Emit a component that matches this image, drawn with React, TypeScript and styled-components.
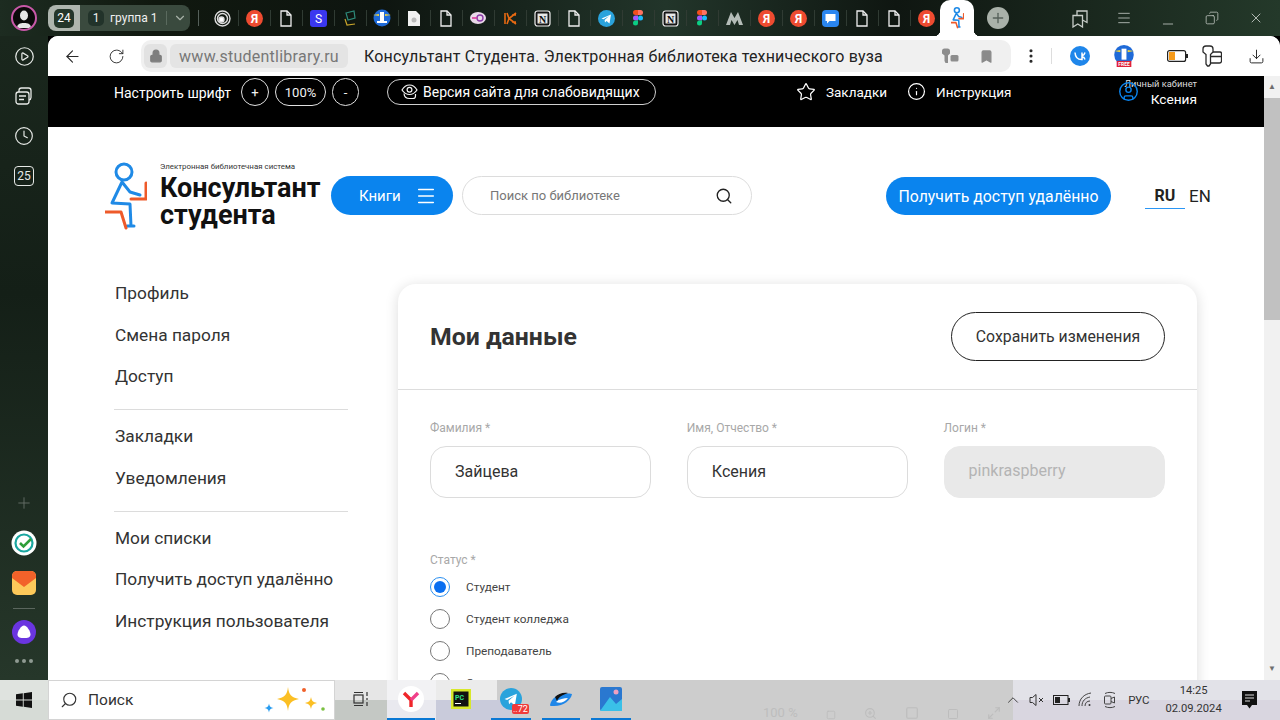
import React from "react";
import styled, { createGlobalStyle } from "styled-components";
import {
  ArrowLeft, RotateCw, Lock, Bookmark, MoreVertical, Download, Star, Info, CircleUser, Search,
  Menu, Plus, X, Minus, ChevronDown, CirclePlay, Clock, Copy, ChevronUp, Maximize2, ZoomIn, Square,
} from "lucide-react";

const Global = createGlobalStyle`
  html, body { margin: 0; padding: 0; width: 1280px; height: 720px; overflow: hidden; background: #000; }
  * { box-sizing: border-box; }
  body { font-family: Roboto, "Liberation Sans", sans-serif; }
`;

const Screen = styled.div`
  width: 1280px; height: 720px; display: flex; flex-direction: column; overflow: hidden;
`;
const Strip = styled.div`
  height: 36px; flex: none; display: flex; align-items: center;
  background: linear-gradient(90deg, #1d2c21 0%, #10180f 12%, #0e1510 30%, #22352a 52%, #0f1611 70%, #24392a 100%);
  color: #e8ebe8;
`;
const AvatarCell = styled.div`
  width: 48px; height: 36px; flex: none; display: flex; align-items: center; justify-content: center;
`;
const Avatar = styled.div`
  width: 26px; height: 26px; border-radius: 50%; border: 2px solid #c858a8; background: #0a0a0a;
  display: flex; align-items: center; justify-content: center; overflow: hidden;
`;
const Counter = styled.div`
  width: 32px; height: 26px; flex: none; border-radius: 8px 0 0 8px; background: #aeb5ae; display: flex; align-items: center; justify-content: center;
`;
const CounterInner = styled.span`
  width: 20px; height: 19px; border-radius: 5px; background: #24362a; color: #fff; font-size: 12px; display: flex; align-items: center; justify-content: center;
`;
const Group = styled.div`
  width: 110px; height: 26px; flex: none; background: #3a4a3e; border-radius: 0 8px 8px 0; display: flex; align-items: center; padding-left: 8px; font-size: 12px; color: #f0f0f0;
`;
const GroupNum = styled.span`
  width: 16px; height: 16px; border-radius: 5px; background: #22332a; display: flex; align-items: center; justify-content: center; margin-right: 6px;
`;
const GroupChevron = styled.span`
  margin-left: 8px; padding-left: 6px; border-left: 1px solid #5a6a5e; display: flex; color: #a8b2a8;
`;
const StripSep = styled.span`
  width: 1px; height: 16px; background: #55605a; flex: none; margin-left: 8px; margin-right: 7px;
`;
const TabSlot = styled.div<{ $sep?: boolean }>`
  width: 32px; height: 36px; flex: none; display: flex; align-items: center; justify-content: center; position: relative;
  &::before { content: ""; position: absolute; left: 0; top: 10px; height: 16px; width: 1px; background: ${(p) => (p.$sep ? "#303b33" : "transparent")}; }
`;
const ActiveTab = styled.div`
  width: 34px; height: 36px; flex: none; background: #fff; border-radius: 10px 10px 0 0; display: flex; align-items: center; justify-content: center; margin-left: -2px; position: relative;
  &::before, &::after { content: ""; position: absolute; bottom: 0; width: 6px; height: 6px; }
  &::before { left: -6px; background: radial-gradient(circle at 0 0, transparent 6px, #fff 6.5px); }
  &::after { right: -6px; background: radial-gradient(circle at 100% 0, transparent 6px, #fff 6.5px); }
`;
const NewTab = styled.div`
  width: 22px; height: 22px; border-radius: 50%; background: #a9b1a9; color: #556059; margin-left: 13px; flex: none; display: flex; align-items: center; justify-content: center;
`;
const WinControls = styled.div`
  margin-left: 49px; display: flex; color: #c7cdc8;
`;
const WinBtn = styled.div`
  width: 44px; height: 36px; display: flex; align-items: center; justify-content: center;
`;

const Middle = styled.div`
  flex: 1; min-height: 0; display: flex;
`;
const Rail = styled.div`
  width: 48px; flex: none; background: linear-gradient(180deg, #1a271d 0%, #141f17 40%, #26372a 100%);
  display: flex; flex-direction: column; align-items: center; color: #e6e9e6;
`;
const RailBtn = styled.div`
  width: 48px; height: 40px; flex: none; display: flex; align-items: center; justify-content: center;
`;
const RailDate = styled.div`
  width: 20px; height: 20px; border: 1.6px solid #e6e9e6; border-radius: 4px; font-size: 12px; display: flex; align-items: center; justify-content: center;
`;
const RailSpacer = styled.div`
  flex: 1;
`;
const RailLine = styled.div`
  width: 22px; height: 1px; background: #5b665e; margin: 5px 0;
`;
const RailSlot = styled.div<{ $h: number }>`
  width: 48px; height: ${(p) => p.$h}px; flex: none; display: flex; align-items: center; justify-content: center; color: #66716a;
`;
const Dots = styled.div`
  height: 22px; display: flex; align-items: center; gap: 3px; margin-bottom: 8px;
`;
const Dot = styled.span`
  width: 4px; height: 4px; border-radius: 50%; background: #8f9a92;
`;

const Browser = styled.div`
  flex: 1; min-width: 0; display: flex; flex-direction: column; background: #fff; border-radius: 10px 10px 0 0; overflow: hidden;
`;
const Toolbar = styled.div`
  height: 40px; flex: none; display: flex; align-items: center; background: #fff; color: #2a2a2a;
`;
const ToolBtn = styled.div<{ $w: number; $ml?: number }>`
  width: ${(p) => p.$w}px; height: 40px; flex: none; margin-left: ${(p) => p.$ml ?? 0}px; display: flex; align-items: center; justify-content: center;
`;
const Address = styled.div`
  width: 870px; height: 32px; flex: none; margin-left: 5px; border-radius: 10px; background: #f0f0f0; display: flex; align-items: center; padding-left: 3px;
`;
const LockChip = styled.div`
  width: 23px; height: 24px; border-radius: 6px; background: #e2e2e2; color: #7e7e7e; display: flex; align-items: center; justify-content: center; flex: none;
`;
const Domain = styled.div`
  width: 178px; height: 24px; margin-left: 3px; border-radius: 6px; background: #e4e4e4; color: #777; font-size: 16px; display: flex; align-items: center; justify-content: center; flex: none; white-space: nowrap; letter-spacing: .25px;
`;
const PageTitle = styled.div`
  margin-left: 16px; font-size: 16px; color: #222; white-space: nowrap; letter-spacing: .18px; width: 570px; flex: none;
`;
const AddrIcon = styled.div<{ $ml: number }>`
  margin-left: ${(p) => p.$ml}px; color: #8a8a8a; display: flex; flex: none;
`;
const ToolSep = styled.div`
  width: 1px; height: 16px; background: #ddd; flex: none;
`;

const Viewport = styled.div`
  flex: 1; min-height: 0; display: flex;
`;
const Page = styled.div`
  flex: 1; min-width: 0; overflow: hidden; background: #fff; display: flex; flex-direction: column;
`;
const Scrollbar = styled.div`
  width: 16px; flex: none; background: #f1f1f1; display: flex; flex-direction: column; align-items: center; color: #6e6e6e;
`;
const ScrollArrow = styled.div`
  height: 22px; flex: none; display: flex; align-items: center; justify-content: center;
  font-size: 8px; line-height: 1;
`;
const Thumb = styled.div`
  width: 16px; height: 222px; background: #c1c1c1; flex: none;
`;
const ScrollRest = styled.div`
  flex: 1;
`;

const TopBar = styled.div`
  height: 51px; flex: none; background: #000; color: #fff; display: flex; align-items: flex-start; padding: 2px 67px 0 66px;
`;
const FontLabel = styled.span`
  margin-top: 7px; white-space: nowrap; font-size: 14px; line-height: 17px; width: 117px; flex: none;
`;
const RoundBtn = styled.div<{ $w: number; $ml: number }>`
  width: ${(p) => p.$w}px; height: 28px; margin-left: ${(p) => p.$ml}px; border: 1px solid #e0e0e0; border-radius: 14px; flex: none;
  display: flex; align-items: center; justify-content: center; font-size: 13px; color: #f2f2f2;
`;
const VisionBtn = styled.div`
  width: 269px; height: 26px; margin: 1px 0 0 28px; border: 1px solid #cfcfcf; border-radius: 13px; flex: none;
  display: flex; align-items: center; gap: 5px; padding-left: 13px; font-size: 14px; white-space: nowrap;
`;
const TopLink = styled.div<{ $ml: number }>`
  margin: 4px 0 0 ${(p) => p.$ml}px; display: flex; align-items: center; gap: 10px; font-size: 13.5px; white-space: nowrap; flex: none;
`;
const Cabinet = styled.div`
  margin-left: 107px; display: flex; position: relative; flex: 1; justify-content: flex-end;
`;
const CabinetIcon = styled.div`
  position: absolute; left: 0; top: 3px; color: #0a84ee; display: flex;
`;
const CabinetText = styled.div`
  text-align: right; white-space: nowrap;
`;
const CabinetSmall = styled.div`
  font-size: 9.3px; line-height: 12px; color: #ddd;
`;
const CabinetName = styled.div`
  font-size: 13.7px; line-height: 17px; margin-top: 1px;
`;

const Header = styled.div`
  flex: none; height: 130px; display: flex; align-items: flex-start; padding: 35px 0 0 57px;
`;
const LogoMark = styled.svg`
  flex: none; display: block;
`;
const LogoText = styled.div`
  width: 171px; margin-left: 13px; flex: none; color: #111;
`;
const LogoSmall = styled.div`
  font-size: 7.9px; line-height: 10px; color: #333; white-space: nowrap; margin-bottom: 3px;
`;
const LogoBig = styled.div`
  font-size: 27px; line-height: 27px; font-weight: 700;
`;
const BooksBtn = styled.div`
  width: 122px; height: 39px; margin-top: 14px; border-radius: 20px; background: #0a84ee; color: #fff; flex: none;
  display: flex; align-items: center; padding-left: 28px; gap: 14px; font-size: 15px;
`;
const SearchBox = styled.div`
  width: 290px; height: 39px; margin: 14px 0 0 9px; border-radius: 20px; border: 1px solid #dcdcdc; flex: none;
  display: flex; align-items: center; justify-content: space-between; padding: 0 18px 0 27px; font-size: 13px; color: #777;
`;
const RemoteBtn = styled.div`
  width: 225px; height: 38px; margin: 15px 0 0 134px; border-radius: 19px; background: #0a84ee; color: #fff; flex: none;
  display: flex; align-items: center; justify-content: center; font-size: 15.85px; white-space: nowrap;
`;
const Lang = styled.div`
  margin: 24px 0 0 34px; display: flex; align-items: flex-start; color: #222;
`;
const LangItem = styled.div`
  width: 40px; height: 23px; text-align: center; line-height: 20px; font-size: 16px; font-weight: 700; border-bottom: 1px solid #2a96f5;
`;
const LangEn = styled.div`
  width: 30px; height: 23px; text-align: center; line-height: 20px; font-size: 17px;
`;

const Content = styled.div`
  flex: 1; min-height: 0; display: flex; padding: 27px 67px 0 66px; align-items: flex-start;
`;
const Side = styled.nav`
  width: 234px; flex: none; margin: -1px 50px 0 0; font-size: 17.3px; color: #333;
`;
const SideItem = styled.div`
  height: 41.5px; line-height: 20px; white-space: nowrap; padding-left: 1px;
`;
const SideSep = styled.div`
  height: 1px; background: #dcdcdc; margin: 1.5px 0 16px;
`;
const Card = styled.section`
  flex: 1; min-width: 0; border-radius: 18px; background: #fff; box-shadow: 0 2px 14px rgba(0, 0, 0, .14); height: 500px;
`;
const CardHead = styled.div`
  height: 106px; display: flex; align-items: center; justify-content: space-between; padding: 0 32px; border-bottom: 1px solid #ddd;
`;
const CardTitle = styled.h1`
  margin: 0; font-size: 24.8px; font-weight: 700; color: #333;
`;
const SaveBtn = styled.div`
  width: 214px; height: 49px; border: 1px solid #222; border-radius: 25px; display: flex; align-items: center; justify-content: center; font-size: 15.8px; color: #333; background: #fff;
`;
const CardBody = styled.div`
  padding: 31px 32px 0;
`;
const Fields = styled.div`
  display: grid; grid-template-columns: repeat(3, 221.3px); column-gap: 35.5px;
`;
const Label = styled.div`
  font-size: 12px; line-height: 14px; color: #a8a8a8; margin-bottom: 11px;
`;
const Input = styled.div<{ $disabled?: boolean }>`
  height: 52px; border-radius: 16px; border: 1px solid ${(p) => (p.$disabled ? "#e9e9e9" : "#dcdcdc")}; background: ${(p) => (p.$disabled ? "#e9e9e9" : "#fff")};
  color: ${(p) => (p.$disabled ? "#b4b4b4" : "#333")}; font-size: 16px; display: flex; align-items: center; padding: 0 0 ${(p) => (p.$disabled ? 3 : 1)}px 24px;
`;
const StatusLabel = styled(Label)`
  margin: 55px 0 4px;
`;
const RadioRow = styled.div`
  height: 32px; display: flex; align-items: center; gap: 16px; font-size: 11.8px; color: #444;
`;
const Radio = styled.span<{ $on?: boolean }>`
  width: 20px; height: 20px; border-radius: 50%; flex: none; background: #fff; border: ${(p) => (p.$on ? "1.5px solid #2a8ff0" : "1px solid #777")};
  display: flex; align-items: center; justify-content: center;
  &::after { content: ""; width: 12px; height: 12px; border-radius: 50%; background: ${(p) => (p.$on ? "#0a6ff0" : "transparent")}; }
`;

const Taskbar = styled.div`
  height: 40px; flex: none; display: flex; align-items: center; color: #222;
  background:
    linear-gradient(90deg, #dfe3df 0 48px, #fff 48px 335px, #e6e6e6 335px 387px, #f2f2f4 387px 436px, #ebebeb 436px 497px, #cdcdcd 497px 1013px, #e2e2e8 1013px 100%) top / 100% 50% no-repeat,
    linear-gradient(90deg, #d6dbd6 0 48px, #fff 48px 335px, #c4c8c4 335px 387px, #e9e9ef 387px 436px, #c9cbdb 436px 510px, #cdcdcd 510px 1013px, #d9d6e0 1013px 100%) bottom / 100% 50% no-repeat;
`;
const Start = styled.div`
  width: 48px; height: 40px; flex: none; display: flex; align-items: center; justify-content: center;
`;
const WinSearch = styled.div`
  width: 287px; height: 40px; flex: none; background: #fff; border: 1px solid #d4d4d4; display: flex; align-items: center; padding-left: 11px; gap: 10px; font-size: 15.5px; color: #333;
`;
const Sparkle = styled.svg`
  margin-left: auto; margin-right: 8px; flex: none;
`;
const TaskIcons = styled.div`
  display: flex; margin-left: 1px; flex: none;
`;
const TaskIcon = styled.div<{ $inset?: number }>`
  width: 50px; height: 40px; position: relative; display: flex; align-items: center; justify-content: center; padding-bottom: 2px;
  &::after { content: ""; position: absolute; left: ${(p) => p.$inset ?? 0}px; right: ${(p) => p.$inset ?? 0}px; bottom: 0; height: 2px; background: ${(p) => (p.$inset === undefined ? "transparent" : "#0a78d4")}; }
`;
const Badge = styled.span`
  position: absolute; left: 26px; top: 24px; background: #f03a3a; color: #fff; font-size: 9px; line-height: 10px; padding: 0 1px; border-radius: 2px;
`;
const Ghost = styled.div`
  display: flex; align-items: flex-end; height: 40px; margin-left: 127px; gap: 28px; color: #bdbdbd; font-size: 13px; line-height: 14px; flex: none; overflow: hidden;
`;
const Tray = styled.div`
  margin-left: auto; display: flex; align-items: center; color: #333; flex: none; padding-bottom: 1px;
`;
const TrayIcon = styled.div`
  width: 24.2px; display: flex; justify-content: center;
`;
const TrayLang = styled.div`
  font-size: 11.5px; margin-left: 2px; width: 30px; text-align: center; letter-spacing: -.3px;
`;
const Clockbox = styled.div`
  margin-left: 9px; width: 62px; text-align: center; font-size: 11.2px; line-height: 18px; color: #333; white-space: nowrap;
`;
const Notify = styled.div`
  width: 50px; margin-right: 10px; display: flex; justify-content: center; color: #111;
`;

type FavKind = "target" | "ya" | "doc" | "s" | "dark" | "tower" | "shield" | "chat" | "k" | "notion" | "tg" | "figma" | "m" | "msg";

const Doc = () => (
  <svg width="14" height="17" viewBox="0 0 14 17" fill="none" stroke="#eee" strokeWidth="1.3"><path d="M2 1h6l4 4v11H2z" /><path d="M8 1v4h4" /></svg>
);
const Ya = () => (
  <svg width="17" height="17" viewBox="0 0 17 17"><circle cx="8.5" cy="8.5" r="8.5" fill="#ee4b30" /><text x="8.5" y="13" fontSize="12" fontWeight="700" fill="#fff" textAnchor="middle" fontFamily="Roboto">Я</text></svg>
);
const Figma = () => (
  <svg width="10" height="16" viewBox="0 0 10 16"><path d="M0 2.5A2.5 2.5 0 0 1 2.5 0H5v5H2.5A2.5 2.5 0 0 1 0 2.5z" fill="#f24e1e" /><path d="M5 0h2.5a2.5 2.5 0 0 1 0 5H5z" fill="#ff7262" /><path d="M0 8a2.5 2.5 0 0 1 2.5-2.5H5v5H2.5A2.5 2.5 0 0 1 0 8z" fill="#a259ff" /><circle cx="7.5" cy="8" r="2.5" fill="#1abcfe" /><path d="M0 13a2.5 2.5 0 0 1 2.5-2.5H5V13a2.5 2.5 0 0 1-5 0z" fill="#0acf83" /></svg>
);
const Notion = () => (
  <svg width="17" height="17" viewBox="0 0 17 17"><rect x="1" y="1" width="15" height="15" rx="2.500" fill="#151515" stroke="#eee" strokeWidth="1.200" /><rect x="3.500" y="3.500" width="10" height="10" fill="#e8e8e8" /><text x="8.500" y="12.500" fontSize="10" fontWeight="700" textAnchor="middle" fill="#111" fontFamily="Liberation Serif">N</text></svg>
);
const Tg = ({ size = 17 }: { size?: number }) => (
  <svg width={size} height={size} viewBox="0 0 17 17"><circle cx="8.5" cy="8.5" r="8.5" fill="#2aa3dc" /><path d="M3.5 8.5l9.5-4-1.5 9-3-2.4-1.5 1.4-.4-2.6 4.5-3.9-5.6 3.3z" fill="#fff" /></svg>
);
const Tower = () => (
  <svg width="18" height="18" viewBox="0 0 18 18"><circle cx="9" cy="9" r="8.5" fill="#1f6ad8" /><path d="M0 6l6-1v2zM18 6l-6-1v2z" fill="#f2d43a" /><rect x="7" y="3" width="4" height="10" fill="#fff" /><rect x="4" y="12" width="10" height="2" fill="#fff" /></svg>
);
const Fav = ({ kind }: { kind: FavKind }) => {
  switch (kind) {
    case "target":
      return <svg width="17" height="17" viewBox="0 0 17 17" fill="none" stroke="#ddd" strokeWidth="1.4"><circle cx="8.5" cy="8.5" r="7.5" /><circle cx="8.5" cy="8.5" r="5" /><circle cx="7.5" cy="9.5" r="2.5" fill="#fff" /></svg>;
    case "ya": return <Ya />;
    case "doc": return <Doc />;
    case "s":
      return <svg width="17" height="17" viewBox="0 0 17 17"><rect width="17" height="17" rx="3" fill="#3a37f0" /><text x="8.5" y="13" fontSize="12" fill="#fff" textAnchor="middle" fontFamily="Roboto">S</text></svg>;
    case "dark":
      return <svg width="16" height="17" viewBox="0 0 16 17" fill="none"><path d="M4 3l8-2 1 7-7 2z" stroke="#2e8a7a" strokeWidth="1.2" /><path d="M3 9l2 6 8-1" stroke="#c9a62c" strokeWidth="1.2" /></svg>;
    case "tower": return <Tower />;
    case "shield":
      return <svg width="14" height="17" viewBox="0 0 14 17"><path d="M1 1h8l4 4v11H1z" fill="#f1f1f1" /><circle cx="7" cy="10" r="2.5" fill="#bbb" /></svg>;
    case "chat":
      return <svg width="17" height="14" viewBox="0 0 17 14"><ellipse cx="8" cy="7" rx="8" ry="6" fill="#e8d8e8" /><circle cx="10" cy="7" r="3" fill="none" stroke="#8a3aa8" strokeWidth="1.4" /><path d="M2 7h5" stroke="#d8389a" strokeWidth="1.6" /></svg>;
    case "k":
      return <svg width="13" height="13" viewBox="0 0 13 13" stroke="#e86a12" strokeWidth="1.6" fill="none"><path d="M1 1v11M12 1L5 6.5 12 12M3 1l2 5.5L3 12M8 3h4M8 10h4" /></svg>;
    case "notion": return <Notion />;
    case "tg": return <Tg />;
    case "figma": return <Figma />;
    case "m":
      return <svg width="17" height="13" viewBox="0 0 17 13"><path d="M0 13L5 0l3.500 6L12 0l5 13h-4l-1.500-5L8.500 13 5.500 8 4 13z" fill="#b4bcb8" /></svg>;
    case "msg":
      return <svg width="17" height="17" viewBox="0 0 17 17"><rect width="17" height="17" rx="4" fill="#2a86f0" /><path d="M3.500 4h10v7h-6l-2.500 2.500V11H3.500z" fill="#fff" /></svg>;
  }
};

const tabs: FavKind[] = ["target", "ya", "doc", "s", "dark", "tower", "shield", "doc", "chat", "k", "notion", "doc", "tg", "figma", "notion", "figma", "m", "ya", "ya", "msg", "doc", "doc", "ya"];

const Logo = ({ w = 42, h = 70, sw = 3 }: { w?: number; h?: number; sw?: number }) => (
  <LogoMark width={w} height={h} viewBox="0 0 42 70" fill="none" strokeLinecap="round" strokeLinejoin="round" strokeWidth={sw}>
    <g stroke="#1f8ae6">
      <circle cx="19" cy="10" r="8" />
      <path d="M17 20L7 41l18 1 1 22M22 64h7M17 20l8 10 10 3" />
    </g>
    <g stroke="#ee5a2a">
      <path d="M41 21v16H26M0 50h16l5 16" />
    </g>
  </LogoMark>
);

const PagesIcon = () => (
  <svg width="20" height="20" viewBox="0 0 20 20" fill="none" stroke="#e6e9e6" strokeWidth="1.300"><rect x="2" y="6" width="13" height="12" rx="2.500" /><path d="M5 6V4.500A2.500 2.500 0 0 1 7.500 2h7A2.500 2.500 0 0 1 17 4.500v7a2.500 2.500 0 0 1-2 2.400M5 10h7M5 13.500h5" /></svg>
);
const BookmarksIcon = () => (
  <svg width="18" height="19" viewBox="0 0 18 19" fill="none" stroke="#c7cdc8" strokeWidth="1.300"><path d="M2 6.500h9.500V18l-4.750-3L2 18z" /><path d="M6 6.500V2h10v11.500l-4.500-2.500" /></svg>
);
const KeyChat = () => (
  <svg width="18" height="16" viewBox="0 0 18 16" fill="#8d8d8d"><path d="M1 3a2.500 2.500 0 0 1 2.500-2.500h3A2.500 2.500 0 0 1 9 3v2.500L7 7.500V15H4.500L3.500 13V7.500L1 5.500z" /><rect x="9.500" y="7" width="8" height="6.500" rx="1.500" /></svg>
);
const KeyFolder = () => (
  <svg width="20" height="22" viewBox="0 0 20 22" fill="none" stroke="#2a2a2a" strokeWidth="1.300"><path d="M1 4a3 3 0 0 1 3-3h4a3 3 0 0 1 3 3v3l-2.500 2.500V19l-1.500 2H5.500L4 19V9.500L1 7z" /><path d="M11 7h7a1.500 1.500 0 0 1 1.500 1.500V16a2 2 0 0 1-2 2H9M9 11.500h10.500" /></svg>
);
const EyeHand = () => (
  <svg width="17" height="16" viewBox="0 0 17 16" fill="none" stroke="#f4f4f4" strokeWidth="1.200"><path d="M1 6c2-3.500 4.500-5 7.500-5S14 2.500 16 6c-2 3-4.500 4.500-7.500 4.500S3 9 1 6z" /><circle cx="8.500" cy="5.800" r="2.400" /><path d="M3 9.500c.2 3 2.500 5 5.500 5h3.500c1.500 0 2.500-1 2.500-2.500v-2" /></svg>
);

export default function App() {
  return (
    <Screen>
      <Global />
      <Strip>
        <AvatarCell>
          <Avatar>
            <svg width="20" height="20" viewBox="0 0 20 20" fill="#e6e6e6"><ellipse cx="10" cy="7.500" rx="4" ry="5" /><path d="M3 20c0-4 3-5 7-5s7 1 7 5z" /></svg>
          </Avatar>
        </AvatarCell>
        <Counter><CounterInner>24</CounterInner></Counter>
        <Group>
          <GroupNum>1</GroupNum>группа 1
          <GroupChevron><ChevronDown size={14} /></GroupChevron>
        </Group>
        <StripSep />
        {tabs.map((k, i) => (
          <TabSlot key={i} $sep={i > 0}><Fav kind={k} /></TabSlot>
        ))}
        <ActiveTab><Logo w={13} h={22} sw={5} /></ActiveTab>
        <NewTab><Plus size={16} /></NewTab>
        <WinControls>
          <WinBtn><BookmarksIcon /></WinBtn>
          <WinBtn><Menu size={16} strokeWidth={1.2} /></WinBtn>
          <WinBtn><Minus size={16} strokeWidth={1.2} style={{ marginTop: 12 }} /></WinBtn>
          <WinBtn><Copy size={14} strokeWidth={1.3} style={{ transform: "scaleX(-1)" }} /></WinBtn>
          <WinBtn><X size={16} strokeWidth={1.3} /></WinBtn>
        </WinControls>
      </Strip>
      <Middle>
        <Rail>
          <RailBtn><CirclePlay size={21} strokeWidth={1.4} /></RailBtn>
          <RailBtn><PagesIcon /></RailBtn>
          <RailBtn><Clock size={20} strokeWidth={1.4} /></RailBtn>
          <RailBtn><RailDate>25</RailDate></RailBtn>
          <RailSpacer />
          <RailSlot $h={40}><Plus size={18} strokeWidth={1.2} /></RailSlot>
          <RailSlot $h={40}>
            <svg width="26" height="26" viewBox="0 0 26 26" fill="none"><circle cx="13" cy="13" r="12.500" fill="#fff" /><circle cx="13" cy="13" r="8.500" stroke="#1aa6a0" strokeWidth="2.200" /><path d="M9 13l3.500 3.500L20 9" stroke="#2f9e3a" strokeWidth="2.600" /></svg>
          </RailSlot>
          <RailSlot $h={40}>
            <svg width="24" height="24" viewBox="0 0 24 24"><rect width="24" height="24" rx="5" fill="#fdc95a" /><path d="M0 5a5 5 0 0 1 5-5h14a5 5 0 0 1 5 5v2l-12 9L0 7z" fill="#f2622a" /></svg>
          </RailSlot>
          <RailLine />
          <RailSlot $h={36}>
            <svg width="24" height="24" viewBox="0 0 24 24"><circle cx="12" cy="12" r="12" fill="#6a35e0" /><path d="M12 5.500c3 0 6.500 6 6.500 9 0 3-3 3.500-6.500 3.500s-6.500-.5-6.500-3.500c0-3 3.500-9 6.500-9z" fill="#fff" /></svg>
          </RailSlot>
          <Dots><Dot /><Dot /><Dot /></Dots>
        </Rail>
        <Browser>
          <Toolbar>
            <ToolBtn $w={48}><ArrowLeft size={19} strokeWidth={1.4} /></ToolBtn>
            <ToolBtn $w={40}><RotateCw size={17} strokeWidth={1.3} /></ToolBtn>
            <Address>
              <LockChip><Lock size={14} fill="#7e7e7e" /></LockChip>
              <Domain>www.studentlibrary.ru</Domain>
              <PageTitle>Консультант Студента. Электронная библиотека технического вуза</PageTitle>
              <AddrIcon $ml={7}><KeyChat /></AddrIcon>
              <AddrIcon $ml={20}><Bookmark size={15} fill="#8a8a8a" /></AddrIcon>
            </Address>
            <ToolBtn $w={40}><MoreVertical size={18} strokeWidth={2.2} /></ToolBtn>
            <ToolSep />
            <ToolBtn $w={55}>
              <svg width="20" height="20" viewBox="0 0 20 20"><circle cx="10" cy="10" r="10" fill="#1f86ea" /><path d="M5 6.500c.3 4.500 2.500 7 6.500 7h.5v-3c1.500.2 2.500 1.300 3 3M15 6.500c-.5 2-1.500 3-3 3.500V6.500" stroke="#fff" strokeWidth="1.500" fill="none" /></svg>
            </ToolBtn>
            <ToolBtn $w={34}><svg width="22" height="22" viewBox="0 0 18 18"><circle cx="9" cy="8" r="8" fill="#1f6ad8" /><path d="M1 5l5-1v2zM17 5l-5-1v2z" fill="#f2d43a" /><rect x="7" y="3" width="4" height="9" fill="#fff" /><rect x="3" y="13" width="12" height="5" fill="#e0203a" /><text x="9" y="17" fontSize="4" fontWeight="700" fill="#fff" textAnchor="middle" fontFamily="Roboto">FREE</text></svg></ToolBtn>
            <ToolBtn $w={50} $ml={11}>
              <svg width="21" height="12" viewBox="0 0 21 12"><rect x=".6" y=".6" width="18" height="10.800" rx="2" fill="#fff" stroke="#222" strokeWidth="1.200" /><rect x="2" y="2" width="6" height="8" fill="#f59a1a" /><rect x="19" y="4" width="2" height="4" fill="#222" /></svg>
            </ToolBtn>
            <ToolBtn $w={20}><KeyFolder /></ToolBtn>
            <ToolBtn $w={48} $ml={10}><Download size={17} strokeWidth={1.4} /></ToolBtn>
          </Toolbar>
          <Viewport>
            <Page>
              <TopBar>
                <FontLabel>Настроить шрифт</FontLabel>
                <RoundBtn $w={28} $ml={10}>+</RoundBtn>
                <RoundBtn $w={51} $ml={6}>100%</RoundBtn>
                <RoundBtn $w={27} $ml={6}>-</RoundBtn>
                <VisionBtn><EyeHand />Версия сайта для слабовидящих</VisionBtn>
                <TopLink $ml={140}><Star size={20} strokeWidth={1.5} />Закладки</TopLink>
                <TopLink $ml={20}><Info size={19} strokeWidth={1.5} />Инструкция</TopLink>
                <Cabinet>
                  <CabinetIcon><CircleUser size={21} strokeWidth={1.6} /></CabinetIcon>
                  <CabinetText>
                    <CabinetSmall>Личный кабинет</CabinetSmall>
                    <CabinetName>Ксения</CabinetName>
                  </CabinetText>
                </Cabinet>
              </TopBar>
              <Header>
                <Logo />
                <LogoText>
                  <LogoSmall>Электронная библиотечная система</LogoSmall>
                  <LogoBig>Консультант<br />студента</LogoBig>
                </LogoText>
                <BooksBtn>Книги<Menu size={22} strokeWidth={1.6} /></BooksBtn>
                <SearchBox>Поиск по библиотеке<Search size={18} color="#222" strokeWidth={1.8} /></SearchBox>
                <RemoteBtn>Получить доступ удалённо</RemoteBtn>
                <Lang><LangItem>RU</LangItem><LangEn>EN</LangEn></Lang>
              </Header>
              <Content>
                <Side>
                  <SideItem>Профиль</SideItem>
                  <SideItem>Смена пароля</SideItem>
                  <SideItem>Доступ</SideItem>
                  <SideSep />
                  <SideItem>Закладки</SideItem>
                  <SideItem>Уведомления</SideItem>
                  <SideSep />
                  <SideItem>Мои списки</SideItem>
                  <SideItem>Получить доступ удалённо</SideItem>
                  <SideItem>Инструкция пользователя</SideItem>
                </Side>
                <Card>
                  <CardHead>
                    <CardTitle>Мои данные</CardTitle>
                    <SaveBtn>Сохранить изменения</SaveBtn>
                  </CardHead>
                  <CardBody>
                    <Fields>
                      <div><Label>Фамилия *</Label><Input>Зайцева</Input></div>
                      <div><Label>Имя, Отчество *</Label><Input>Ксения</Input></div>
                      <div><Label>Логин *</Label><Input $disabled>pinkraspberry</Input></div>
                    </Fields>
                    <StatusLabel>Статус *</StatusLabel>
                    <RadioRow><Radio $on />Студент</RadioRow>
                    <RadioRow><Radio />Студент колледжа</RadioRow>
                    <RadioRow><Radio />Преподаватель</RadioRow>
                    <RadioRow><Radio />Специалист</RadioRow>
                  </CardBody>
                </Card>
              </Content>
            </Page>
            <Scrollbar>
              <ScrollArrow>▲</ScrollArrow>
              <Thumb />
              <ScrollRest />
              <ScrollArrow>▼</ScrollArrow>
            </Scrollbar>
          </Viewport>
        </Browser>
      </Middle>
      <Taskbar>
        <Start>
          <svg width="16" height="16" viewBox="0 0 16 16" fill="#111"><path d="M0 2.300l6.800-1v6.200H0zM7.700 1.200L16 0v7.500H7.700zM0 8.500h6.800v6.200l-6.800-1zM7.700 8.500H16V16l-8.300-1.200z" /></svg>
        </Start>
        <WinSearch>
          <Search size={18} strokeWidth={1.5} style={{ transform: "scaleX(-1)" }} />
          Поиск
          <Sparkle width="62" height="30" viewBox="0 0 62 30">
            <path d="M24 2c1 8 3 10 11 12-8 2-10 4-11 12-1-8-3-10-11-12 8-2 10-4 11-12z" fill="#fbbf24" />
            <path d="M47 12c.8 4 2 5 6 6-4 1-5.200 2-6 6-.8-4-2-5-6-6 4-1 5.200-2 6-6z" fill="#fbbf24" />
            <path d="M5 18.500c.6 3 1.500 3.900 4.500 4.500-3 .6-3.900 1.500-4.500 4.500-.6-3-1.500-3.900-4.500-4.500 3-.6 3.900-1.500 4.500-4.500z" fill="#2a9df0" />
            <circle cx="40" cy="5" r="2" fill="#f0602a" />
            <circle cx="59" cy="24" r="1.800" fill="#7ac040" />
          </Sparkle>
        </WinSearch>
        <TaskIcons>
          <TaskIcon>
            <svg width="16" height="16" viewBox="0 0 16 16" fill="none" stroke="#333" strokeWidth="1.200"><rect x="1" y="4" width="9" height="8" /><path d="M1 1.500h9M1 14.500h9M14 1v4M14 7v2M14 11v4" /></svg>
          </TaskIcon>
          <TaskIcon $inset={1}>
            <svg width="26" height="26" viewBox="0 0 26 26"><circle cx="13" cy="13" r="13" fill="#fff" /><path d="M6 7l7 7v7" stroke="#f0262a" strokeWidth="3.400" fill="none" /><path d="M20 7l-7 7" stroke="#f0408a" strokeWidth="3.400" fill="none" /></svg>
          </TaskIcon>
          <TaskIcon>
            <svg width="20" height="20" viewBox="0 0 20 20"><rect width="20" height="20" fill="#d8e82a" /><rect x="2.500" y="2.500" width="15" height="15" fill="#111" /><text x="4" y="11" fontSize="7" fontWeight="700" fill="#2fe28a" fontFamily="Roboto">PC</text><rect x="4" y="14" width="6" height="1" fill="#fff" /></svg>
          </TaskIcon>
          <TaskIcon $inset={5}>
            <Tg size={22} />
            <Badge>..72</Badge>
          </TaskIcon>
          <TaskIcon $inset={6}>
            <svg width="24" height="16" viewBox="0 0 24 16"><path d="M1 14C3 6 11 1 23 3c-1 6-9 13-20 12-1 0-2 0-2-1z" fill="#1e86e8" /><path d="M6 6c3-3 8-5 13-4-3 1-9 3-11 8z" fill="#111" /><path d="M7 11c3-3 8-4 12-4-3 4-8 6-12 4z" fill="#fff" /></svg>
          </TaskIcon>
          <TaskIcon $inset={5}>
            <svg width="22" height="24" viewBox="0 0 22 24"><rect width="22" height="24" rx="2" fill="#2a78d0" /><path d="M0 24L10 10l6 7 6-5v12z" fill="#3ac0e8" /><circle cx="16" cy="5" r="2.500" fill="#f0a0c0" /></svg>
          </TaskIcon>
        </TaskIcons>
        <Ghost>
          <span>100 %</span>
          <Square size={10} />
          <ZoomIn size={13} />
          <Square size={14} />
          <Square size={12} />
          <Maximize2 size={14} />
        </Ghost>
        <Tray>
          <TrayIcon><ChevronUp size={18} strokeWidth={1.2} /></TrayIcon>
          <TrayIcon>
            <svg width="16" height="14" viewBox="0 0 16 14" fill="none" stroke="#333" strokeWidth="1"><path d="M1 4.500h2.500L7 1.500v11l-3.500-3H1zM10 5l4 4M14 5l-4 4" /></svg>
          </TrayIcon>
          <TrayIcon>
            <svg width="17" height="10" viewBox="0 0 17 10"><rect x=".5" y=".5" width="14.500" height="9" fill="none" stroke="#222" /><rect x="2" y="2" width="5" height="6" fill="#222" /><rect x="15" y="3" width="2" height="4" fill="#222" /></svg>
          </TrayIcon>
          <TrayIcon>
            <svg width="15" height="15" viewBox="0 0 15 15" fill="none" stroke="#444" strokeWidth="1"><path d="M1 14C1 7 6 2 13 1M4 14c0-5 3-8 8-9M7 14c0-3 2-5 5-5" /><circle cx="11.500" cy="13" r="1" fill="#333" stroke="none" /></svg>
          </TrayIcon>
          <TrayIcon>
            <svg width="14" height="18" viewBox="0 0 14 18" fill="none" stroke="#444" strokeWidth="1"><rect x="1.500" y="5" width="6.500" height="8" rx="1" /><path d="M8 7.500l3.500-1.500v6L8 10.500M2 2.500c3-1.500 7-1.500 10 0M2 15.500c3 1.500 7 1.500 10 0" /></svg>
          </TrayIcon>
          <TrayLang>РУС</TrayLang>
          <Clockbox>14:25<br />02.09.2024</Clockbox>
          <Notify>
            <svg width="15" height="18" viewBox="0 0 15 18"><path d="M0 0h15v14h-5l-2.500 3.500L5 14H0z" fill="#111" /><path d="M3 4h9M3 7h9M3 10h5" stroke="#ddd" strokeWidth="1" /></svg>
          </Notify>
        </Tray>
      </Taskbar>
    </Screen>
  );
}
